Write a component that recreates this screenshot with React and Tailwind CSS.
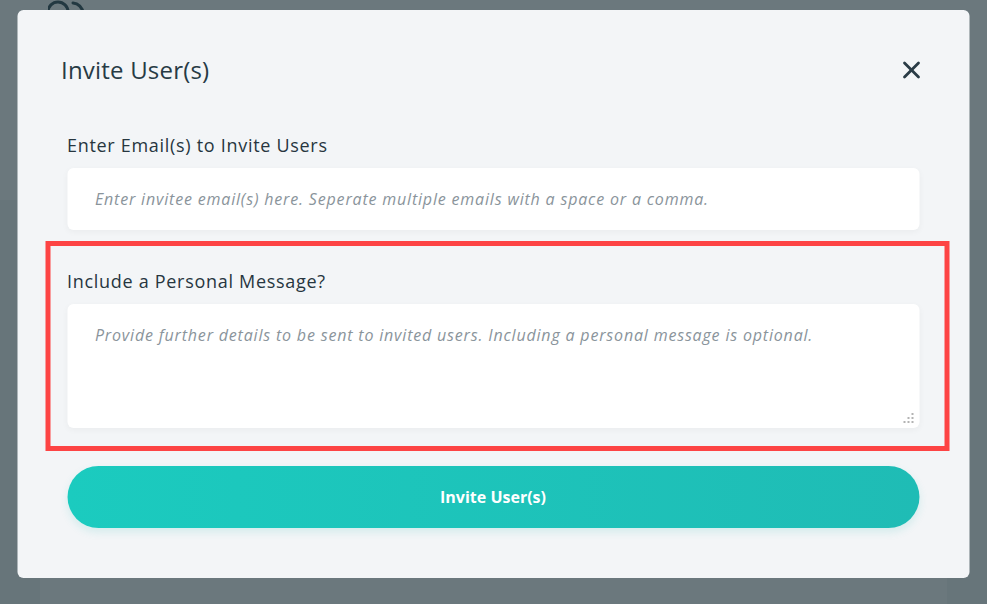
import React from "react";
import { X } from "lucide-react";

function ResizeGrip() {
  return (
    <svg className="absolute right-[5px] bottom-[3px]" width="12" height="12" viewBox="0 0 12 12">
      <rect x="9" y="0" width="2" height="2" fill="#b3b3b3" />
      <rect x="5" y="4" width="2" height="2" fill="#b3b3b3" />
      <rect x="9" y="4" width="2" height="2" fill="#b3b3b3" />
      <rect x="1" y="8" width="2" height="2" fill="#b3b3b3" />
      <rect x="5" y="8" width="2" height="2" fill="#b3b3b3" />
      <rect x="9" y="8" width="2" height="2" fill="#b3b3b3" />
    </svg>
  );
}

export default function App() {
  return (
    <div className="relative h-screen w-full overflow-hidden bg-[#f1f3f5] font-['Open_Sans',sans-serif]">
      {/* page behind the dialog */}
      <div className="h-[200px] bg-white px-[48px]">
        <svg width="40" height="30" viewBox="0 0 40 30">
          <circle cx="10" cy="12" r="10" fill="none" stroke="#0d2a36" strokeWidth="3" />
          <path d="M25 3 a11 11 0 0 1 10 10" fill="none" stroke="#0d2a36" strokeWidth="3" strokeLinecap="round" />
        </svg>
      </div>
      <div className="mx-[40px] mt-[40px] h-[500px] bg-white" />

      {/* overlay */}
      <div className="absolute inset-0 bg-[#2c3e46]/70">
        <div className="mx-auto mt-[10px] w-[952px] -translate-x-[0.5px] rounded-md bg-[#f3f5f7] pb-[50px] pt-[44px]">
          <div className="flex items-center justify-between pl-[44px] pr-[44px]">
            <h1 className="text-[24px] leading-8 tracking-[0.2px] text-[#273b45]">Invite User(s)</h1>
            <button className="flex h-7 w-7 items-center justify-center text-[#2a3c46]">
              <X size={28} strokeWidth={2.4} />
            </button>
          </div>

          <div className="mt-[47px] px-[50px]">
            <label className="block text-[18px] leading-6 tracking-[0.7px] text-[#27363f]">
              Enter Email(s) to Invite Users
            </label>
            <div className="mt-[11px] flex h-[62px] items-center rounded-md bg-white px-[28px] shadow-[0_2px_6px_rgba(0,0,0,0.04)]">
              <span className="text-[16px] italic tracking-[0.82px] text-[#8a949b]">
                Enter invitee email(s) here. Seperate multiple emails with a space or a comma.
              </span>
            </div>

            <div className="-ml-[22px] -mr-[30px] mt-[11px] border-[5px] border-[#fd4444] pb-[18px] pl-[17px] pr-[25px] pt-[23px]">
              <label className="block text-[18px] leading-6 tracking-[0.7px] text-[#27363f]">
                Include a Personal Message?
              </label>
              <div className="relative mt-[11px] h-[124px] rounded-md bg-white px-[28px] pt-[19px] shadow-[0_2px_6px_rgba(0,0,0,0.04)]">
                <span className="text-[16px] italic leading-6 tracking-[0.82px] text-[#8a949b]">
                  Provide further details to be sent to invited users. Including a personal message is optional.
                </span>
                <ResizeGrip />
              </div>
            </div>

            <button className="mt-[15px] flex h-[62px] w-full items-center justify-center rounded-full bg-gradient-to-r from-[#1bcbbf] to-[#1fbcb5] text-[16px] font-bold text-white shadow-[0_4px_8px_rgba(31,189,181,0.15)]">
              Invite User(s)
            </button>
          </div>
        </div>
      </div>
    </div>
  );
}
